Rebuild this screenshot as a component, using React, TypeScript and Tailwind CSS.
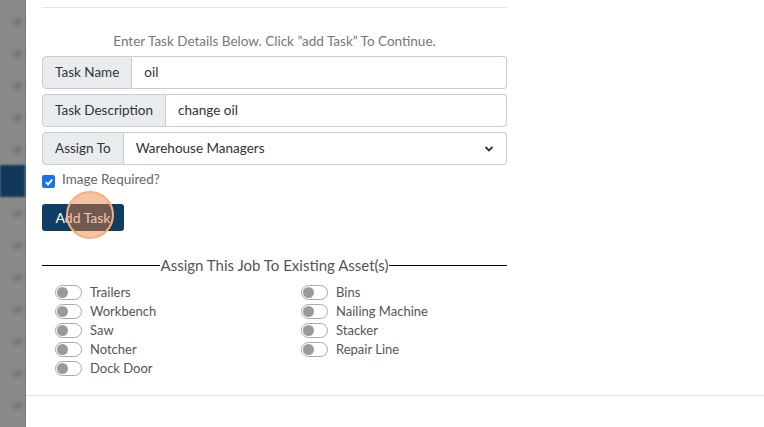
import React from 'react';

const font = { fontFamily: '"Lato", "Liberation Sans", sans-serif' };

const leftAssets = ['Trailers', 'Workbench', 'Saw', 'Notcher', 'Dock Door'];
const rightAssets = ['Bins', 'Nailing Machine', 'Stacker', 'Repair Line'];

function Toggle({ label }: { label: string }) {
  return (
    <div className="flex items-center h-[19px]">
      <span className="relative w-[27px] h-[15px] rounded-full border border-[#a8a8a8] bg-white">
        <span className="absolute left-[1px] top-[1px] w-[11px] h-[11px] rounded-full bg-[#9a9a9a]" />
      </span>
      <span className="ml-[8px] text-[13px] text-[#555]">{label}</span>
    </div>
  );
}

function InputRow({ label, value, select }: { label: string; value: string; select?: boolean }) {
  return (
    <div className="flex h-[33px] text-[13.5px] text-[#333]">
      <div className="flex items-center px-[12px] bg-[#e9ecef] border border-[#ccc] rounded-l-[4px]">{label}</div>
      <div className="flex-1 flex items-center px-[12px] border border-l-0 border-[#ccc] rounded-r-[4px] bg-white">
        <span className="flex-1">{value}</span>
        {select && (
          <svg width="10" height="8" viewBox="0 0 10 8">
            <path d="M1.5 2 L5 5.5 L8.5 2" fill="none" stroke="#333" strokeWidth="1.8" />
          </svg>
        )}
      </div>
    </div>
  );
}

export default function App() {
  return (
    <div className="flex w-[764px] h-[427px] overflow-hidden bg-white" style={font}>
      {/* blurred sidebar behind modal */}
      <div className="w-[26px] h-full bg-[#8a8a8a] border-r border-[#787878] flex flex-col">
        <div className="h-[5px]" />
        {[0, 1, 2, 3, 4].map((i) => (
          <div key={i} className="h-[32px] w-full flex items-center justify-end pr-[3px]">
            <div className="w-[9px] h-[7px] rounded-full bg-[#747474] blur-[2px]" />
          </div>
        ))}
        <div className="h-[32px] w-full bg-[#10385a] blur-[1px]" />
        {[0, 1, 2, 3, 4, 5, 6].map((i) => (
          <div key={i} className="h-[32px] w-full flex items-center justify-end pr-[3px]">
            <div className="w-[9px] h-[7px] rounded-full bg-[#767676] blur-[2px]" />
          </div>
        ))}
      </div>

      <div className="flex-1 flex flex-col">
        <div className="pl-[16px] w-[481px]">
          <div className="h-[8px] border-b border-[#e5e5e5]" />
          <div className="h-[48px] flex items-end justify-center pb-[5px] text-[13.5px] text-[#777]">
            Enter Task Details Below. Click ”add Task” To Continue.
          </div>
          <div className="flex flex-col gap-[5px]">
            <InputRow label="Task Name" value="oil" />
            <InputRow label="Task Description" value="change oil" />
            <InputRow label="Assign To" value="Warehouse Managers" select />
          </div>
          <div className="flex items-center mt-[6px] h-[16px]">
            <span className="w-[13px] h-[13px] rounded-[2px] bg-[#1a73e8] flex items-center justify-center mt-[5px]">
              <svg width="10" height="10" viewBox="0 0 10 10">
                <path d="M1.8 5.2 L4 7.4 L8.3 2.6" fill="none" stroke="white" strokeWidth="1.8" />
              </svg>
            </span>
            <span className="ml-[7px] text-[13.5px] text-[#666]">Image Required?</span>
          </div>
          <div className="relative mt-[17px] h-[27px]">
            <button className="h-[27px] w-[82px] rounded-[3px] bg-[#0f3d63] text-white text-[14px]">Add Task</button>
            <span className="absolute left-[24px] top-[-13px] w-[48px] h-[48px] rounded-full border-2 border-[#f7b07c] bg-[#e87a3a]/45" />
          </div>
          <div className="flex items-center mt-[26px] h-[16px]">
            <div className="flex-1 h-px bg-black" />
            <span className="text-[15px] text-[#555] px-[1px]">Assign This Job To Existing Asset(s)</span>
            <div className="flex-1 h-px bg-black" />
          </div>
          <div className="flex mt-[10px] pl-[13px]">
            <div className="w-[246px] flex flex-col">
              {leftAssets.map((a) => (
                <Toggle key={a} label={a} />
              ))}
            </div>
            <div className="flex flex-col">
              {rightAssets.map((a) => (
                <Toggle key={a} label={a} />
              ))}
            </div>
          </div>
        </div>
        <div className="mt-[17px] border-b border-[#e0e0e0]" />
      </div>
    </div>
  );
}
